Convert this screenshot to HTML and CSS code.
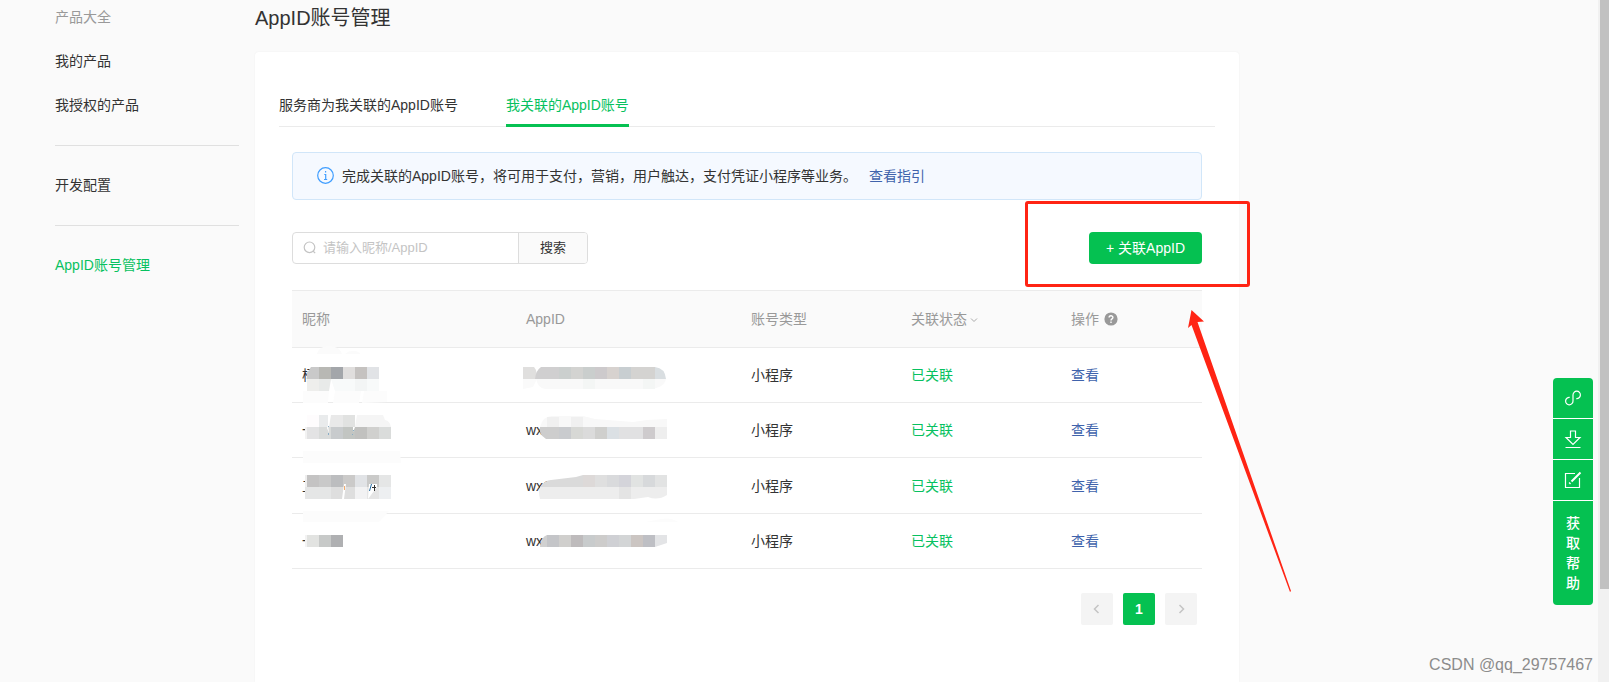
FILE: index.html
```html
<!DOCTYPE html>
<html lang="zh-CN">
<head>
<meta charset="utf-8">
<title>AppID账号管理</title>
<link rel="stylesheet" href="styles.css">
</head>
<body>
<div class="page">
  <nav class="sidebar">
    <div class="group">
      <span class="group-title">产品大全</span>
      <a class="nav-link" href="#">我的产品</a>
      <a class="nav-link" href="#">我授权的产品</a>
    </div>
    <div class="group"><a class="nav-link" href="#">开发配置</a></div>
    <div class="group"><a class="nav-link active" href="#">AppID账号管理</a></div>
  </nav>
  <main class="main">
    <h1 class="title">AppID账号管理</h1>
    <section class="card">
      <div class="tabs">
        <button class="tab" type="button">服务商为我关联的AppID账号</button>
        <button class="tab selected" type="button">我关联的AppID账号</button>
      </div>
      <div class="panel">
        <div class="notice">
          <svg class="info" viewBox="0 0 17 17"><circle cx="8.5" cy="8.5" r="7.8"/><path d="M7.300 7.500h1.400v5M7 12.500h3.200"/><path d="M8.600 4v1.600"/></svg>
          <span>完成关联的AppID账号，将可用于支付，营销，用户触达，支付凭证小程序等业务。</span>
          <a class="link guide" href="#">查看指引</a>
        </div>
        <div class="toolbar">
          <form class="search">
            <label class="field">
              <svg class="glass" viewBox="0 0 14 14"><circle cx="6.5" cy="6.3" r="5.3"/><path d="M10 10l2.2 2.2"/></svg>
              <input class="input" type="text" placeholder="请输入昵称/AppID" aria-label="请输入昵称/AppID">
            </label>
            <button class="search-btn" type="button">搜索</button>
          </form>
          <button class="add-btn" type="button">+ 关联AppID</button>
        </div>
        <table class="table">
          <colgroup><col class="c-name"><col class="c-id"><col class="c-type"><col class="c-state"><col></colgroup>
          <thead>
            <tr>
              <th>昵称</th><th>AppID</th><th>账号类型</th>
              <th>关联状态<svg class="caret" viewBox="0 0 10 8"><path d="M2 2.500l3 3 3-3"/></svg></th>
              <th>操作<svg class="help" viewBox="0 0 14 14"><circle cx="7" cy="7" r="6.6"/><path d="M5.1 5.6c0-2.4 3.8-2.4 3.8-.1C8.900 6.900 7 6.900 7 8.400M7 9.600v1.500"/></svg></th>
            </tr>
          </thead>
          <tbody>
            <tr>
              <td>杨
                <svg class="mosaic" viewBox="292 338 170 76">
                  <path fill="#fff" d="M308 358h15v10h-15z"/>
                  <path fill="#fbfbfb" d="M317 354q2-8 12-8t13 8zM345 354q7-6 15-1v1z"/>
                  <path fill="#c9c9c9" d="M307 379v-6l4-6h8v12z"/>
                  <path fill="#b8b8b4" d="M319 367h12v12h-12z"/><path fill="#a3a6aa" d="M331 367h12v12h-12z"/>
                  <path fill="#e0dedd" d="M343 367h12v12h-12z"/><path fill="#c5c2c0" d="M355 367h12v12h-12z"/><path fill="#e1e3e6" d="M367 367h12v12h-12z"/>
                  <path fill="#eeeeec" d="M307 379h12v12h-12z"/><path fill="#e8eae9" d="M319 379h12l-2 12h-10z"/>
                  <path fill="#f8fafa" d="M331 379h48v12h-44z"/><path fill="#f3f5f5" d="M355 379h12v12h-12z"/>
                  <path fill="#fcfcfc" d="M303 391h26l-1 12h-25zM335 391h26l-2 12h-26zM364 391h23v11l-25 1z"/>
                </svg></td>
              <td>
                <svg class="mosaic" viewBox="516 338 170 76">
                  <path fill="#e0dfde" d="M523 367h11l2 3 1 9h-14z"/><path fill="#fafafa" d="M523 379h14l-4 8-10 2z"/>
                  <path fill="#d0cfd0" d="M535 379q1-9 6-12h6v12z"/><path fill="#d0cfd0" d="M547 367h12v12h-12z"/><path fill="#cbcfce" d="M559 367h12v12h-12z"/>
                  <path fill="#d3d3d1" d="M571 367h12v12h-12z"/><path fill="#cacecd" d="M583 367h12v12h-12z"/><path fill="#cdcacc" d="M595 367h12v12h-12z"/>
                  <path fill="#d7d2cf" d="M607 367h12v12h-12z"/><path fill="#c8ced1" d="M619 367h12v12h-12z"/><path fill="#d4d3d1" d="M631 367h24v12h-24z"/>
                  <path fill="#d9dee1" d="M655 367q10 1 11 12h-11z"/>
                  <path fill="#f9f9f9" d="M536 379h130q-2 10-19 10H545q-7-1-9-10z"/><path fill="#f4f6f5" d="M583 379h12v10h-12zM643 379h12v10h-12z"/>
                </svg></td>
              <td>小程序</td><td class="ok">已关联</td><td><a class="link" href="#">查看</a></td>
            </tr>
            <tr>
              <td>一
                <svg class="mosaic" viewBox="292 393 170 76">
                  <path fill="#fff" d="M305 421h14v8h-14z"/>
                  <path fill="#fefcfd" d="M307 415h12v12h-12z"/><path fill="#e9ebec" d="M319 415h9v12h-9z"/>
                  <path fill="#e9e9e9" d="M331 415h12v12h-14z"/><path fill="#e1e2e1" d="M343 415h12v12h-12z"/><path fill="#f5f5f5" d="M357 415h26l2 5q5 1 6 7h-36z"/>
                  <path fill="#f2f2f2" d="M305 427h2v12h-2z"/><path fill="#e3e3e4" d="M307 427h12v12h-12z"/><path fill="#d9dbda" d="M319 427h12v12h-12z"/>
                  <path fill="#c8cbcd" d="M331 427h12v12h-12z"/><path fill="#c2c5c2" d="M343 427h12v12h-12z"/><path fill="#c1c1bf" d="M355 427h12v12h-12z"/>
                  <path fill="#d0d0ce" d="M367 427h12v12h-12z"/><path fill="#dadcdb" d="M379 427h12v12h-12z"/>
                  <path fill="#fff" d="M328 425l1 8-2-5zM353 427h2l-2 5z"/><path fill="#8baec6" d="M328 426h1v1h-1zM328 433h1v2h-1zM353 430h1v1h-1zM352 434h1v1h-1z"/>
                  <path fill="#fcfcfc" d="M303 451h97l1 12h-98z"/>
                </svg></td>
              <td>wx
                <svg class="mosaic" viewBox="516 393 170 76">
                  <path fill="#f8f8f8" d="M540 427q3-11 12-11h31l12 3 38 3 14-2 20-1v8z"/><path fill="#f0f0f0" d="M547 417h12v10h-12zM571 417h12v10h-12z"/>
                  <path fill="#cdcdcd" d="M546 439q-8-5-6-12h19v12z"/><path fill="#c9cbce" d="M559 427h12v12h-12z"/><path fill="#d7d8d5" d="M571 427h12v12h-12z"/>
                  <path fill="#dbdbdb" d="M583 427h12v12h-12z"/><path fill="#cfcfcd" d="M595 427h12v12h-12z"/><path fill="#dbe0e4" d="M607 427h12v12h-12z"/>
                  <path fill="#e1e1e2" d="M619 427h24v12h-24z"/><path fill="#cecbcd" d="M643 427h12v12h-12z"/><path fill="#eee" d="M655 427h12v12h-12z"/>
                </svg></td>
              <td>小程序</td><td class="ok">已关联</td><td><a class="link" href="#">查看</a></td>
            </tr>
            <tr>
              <td>工
                <svg class="mosaic" viewBox="292 448 170 76">
                  <path fill="#fff" d="M305 476h14v18h-14z"/>
                  <path fill="#eee" d="M305 475h2v12h-2z"/><path fill="#c4c3c3" d="M307 475h12v12h-12z"/><path fill="#c9c9c9" d="M319 475h12v12h-12z"/>
                  <path fill="#bcbdbf" d="M331 475h12v12h-12z"/><path fill="#cbcac9" d="M343 475h12v12h-12z"/><path fill="#e1e3e6" d="M355 475h12v12h-12z"/>
                  <path fill="#cacac9" d="M367 475h12v12h-12z"/><path fill="#e5e6e6" d="M379 475h12v12h-12z"/>
                  <path fill="#e5e6e6" d="M305 487h26v12h-26z"/><path fill="#dedede" d="M331 487h24v12h-24z"/><path fill="#f2f2f3" d="M355 487h12v12h-12z"/>
                  <path fill="#e5e5e5" d="M367 487h12v12h-12z"/><path fill="#edeff1" d="M379 487h12v12h-12z"/>
                  <path fill="#fff" d="M344 484h2l-2 15h-2zM369 484h8v3l-9 12z"/><path fill="#f3ad70" d="M344 486h1v4h-1z"/><path stroke="#246ba2" d="M371.500 484l-2 7"/><path stroke="#333" d="M372 487.500h4M374.500 485v6"/>
                  <path fill="#fcfcfc" d="M303 511h86l-10 11h-76z"/>
                </svg></td>
              <td>wx1
                <svg class="mosaic" viewBox="516 448 170 76">
                  <path fill="#ededed" d="M540 499q-2-8 0-12h127v8q-9 6-19 2l-14 2z"/>
                  <path fill="#dadada" d="M540 487q5-7 11-7l25-3 7-2h12v12z"/><path fill="#ddd9d8" d="M583 475h12v12h-12z"/><path fill="#dfdfdf" d="M595 475h12v12h-12z"/>
                  <path fill="#d9dadc" d="M607 475h12v12h-12z"/><path fill="#d4d4da" d="M619 475h12v12h-12z"/><path fill="#e1e3e2" d="M631 475h12v12h-12z"/>
                  <path fill="#d7d9db" d="M643 475h12v12h-12z"/><path fill="#e2e3e3" d="M655 475h12v12h-12z"/><path fill="#e4e4e4" d="M619 487h12v12h-12z"/>
                </svg></td>
              <td>小程序</td><td class="ok">已关联</td><td><a class="link" href="#">查看</a></td>
            </tr>
            <tr>
              <td>一
                <svg class="mosaic" viewBox="292 504 170 76">
                  <path fill="#fff" d="M305 528h14v16h-14z"/>
                  <path fill="#f3f3f3" d="M305 535h2v12h-2z"/><path fill="#e2e3e1" d="M307 535h12v12h-12z"/><path fill="#c7c9c8" d="M319 535h12v12h-12z"/><path fill="#afb0b2" d="M331 535h12v12h-12z"/>
                </svg></td>
              <td>wx
                <svg class="mosaic" viewBox="516 504 170 76">
                  <path fill="#d0d0d0" d="M540 547q1-10 7-12v12z"/><path fill="#c4c5c8" d="M547 535h12v12h-12z"/><path fill="#d0cfcd" d="M559 535h12v12h-12z"/>
                  <path fill="#bebbbc" d="M571 535h12v12h-12z"/><path fill="#c8cbcc" d="M583 535h12v12h-12z"/><path fill="#cdcccb" d="M595 535h12v12h-12z"/>
                  <path fill="#cfd0d4" d="M607 535h12v12h-12z"/><path fill="#d3d5d6" d="M619 535h12v12h-12z"/><path fill="#cbc5c2" d="M631 535h12v12h-12z"/>
                  <path fill="#bebfc4" d="M643 535h12v12h-12z"/><path fill="#e3e4e6" d="M655 535h12v8l-12 4z"/><path fill="#fcfcfc" d="M646 522l10-2q14-4 22 2z"/>
                </svg></td>
              <td>小程序</td><td class="ok">已关联</td><td><a class="link" href="#">查看</a></td>
            </tr>
          </tbody>
        </table>
        <div class="pager">
          <button class="page-btn" type="button" aria-label="上一页"><svg class="chev" viewBox="0 0 12 12"><path d="M7.500 2l-4 4 4 4"/></svg></button>
          <button class="page-btn current" type="button">1</button>
          <button class="page-btn" type="button" aria-label="下一页"><svg class="chev" viewBox="0 0 12 12"><path d="M4.500 2l4 4-4 4"/></svg></button>
        </div>
      </div>
    </section>
  </main>
</div>

<aside class="float-bar">
  <button class="float-btn" type="button" aria-label="链接"><svg class="float-icon" viewBox="0 0 16 16"><path d="M4.700 7.400A3.700 3.700 0 1 0 8 11V5a3.700 3.700 0 1 1 3.300 3.600"/></svg></button>
  <button class="float-btn" type="button" aria-label="下载"><svg class="float-icon" viewBox="0 0 16 16"><path d="M5.500 0h5v6.500H15L8 13.500 1 6.500h4.500zM.5 16.500h15"/></svg></button>
  <button class="float-btn" type="button" aria-label="编辑"><svg class="float-icon" viewBox="0 0 16 16"><path d="M10 1.500H.5v14h14V6"/><path class="pen" d="M15.500.5L6.500 9.500M4.300 11.700l1-1"/></svg></button>
  <button class="float-btn help-btn" type="button">获<br>取<br>帮<br>助</button>
</aside>
<div class="scroll-track"><div class="scroll-thumb"></div></div>
<div class="mark-box"></div>
<svg class="mark-arrow" viewBox="0 0 104 284"><path d="M4.500 0L17 11.500l-6.500.5L104 281l-1 1L4.500 15 1 18z"/></svg>
<div class="watermark">CSDN @qq_29757467</div>
</body>
</html>
```
FILE: styles.css
```css
* { box-sizing: border-box; }
body {
  margin: 0;
  height: 100vh;
  overflow: hidden;
  position: relative;
  background: #fafafa;
  color: #333;
  font: 14px/20px "Liberation Sans", "Noto Sans CJK SC", sans-serif;
}
button, input { font: inherit; color: inherit; border: 0; margin: 0; padding: 0; background: none; }
a { text-decoration: none; color: inherit; }
svg { fill: none; flex: none; }

.page { display: flex; gap: 16px; min-height: 100vh; padding-left: 55px; padding-right: 60px; }
.sidebar { flex: none; width: 184px; padding-top: 7px; }
.group { display: flex; flex-direction: column; gap: 24px; padding-bottom: 30px; }
.group + .group { border-top: 1px solid #e0e0e0; padding-top: 29px; }
.group-title { color: #999; }
.active { color: #07c160; }

.main { flex: 1; max-width: 984px; display: flex; flex-direction: column; }
.title { margin: 0; padding: 4px 0 20px; font-size: 20px; line-height: 28px; font-weight: 400; }
.card { flex: 1; background: #fff; border-radius: 4px 4px 0 0; padding: 32px 24px; box-shadow: 0 0 2px #eee; }
.tabs { display: flex; gap: 48px; border-bottom: 1px solid #ebebeb; }
.tab { height: 43px; padding-top: 1px; margin-bottom: -1px; white-space: nowrap; border-bottom: 3px solid transparent; }
.tab.selected { color: #07c160; border-bottom-color: #06c152; }
.panel { padding: 25px 13px; }

.notice { display: flex; align-items: center; gap: 8px; height: 48px; padding: 0 24px 1px; background: #f5f9ff; border: 1px solid #d1e6f9; border-radius: 4px; }
.info { width: 17px; height: 17px; stroke: #409eff; stroke-width: 1.2; }
.link { color: #4063ac; }
.guide { margin-left: 4px; }

.toolbar { display: flex; justify-content: space-between; margin: 32px 0 26px; height: 32px; }
.search { display: flex; width: 296px; border: 1px solid #ddd; border-radius: 4px; font-size: 13px; overflow: hidden; }
.field { flex: 1; display: flex; align-items: center; gap: 6px; padding-left: 10px; }
.glass { width: 14px; height: 14px; stroke: #c4c4c4; stroke-width: 1.2; }
.input { flex: 1; min-width: 0; outline: 0; }
.input::placeholder { color: #c4c4c4; opacity: 1; }
.search-btn { width: 69px; background: #fafafa; border-left: 1px solid #ddd; }
.add-btn { padding: 0 17px; border-radius: 4px; background: #05c151; color: #fff; }

.table { width: 100%; table-layout: fixed; border-collapse: separate; border-spacing: 0; }
.c-name, .c-id { width: 225px; }
.c-name { width: 224px; }
.c-type, .c-state { width: 160px; }
.table th, .table td { position: relative; padding: 0 10px; text-align: left; font-weight: 400; border-bottom: 1px solid #ebebeb; white-space: nowrap; }
.table th { height: 58px; color: #999; background: #fafafa; border-top: 1px solid #ebebeb; }
.table td { height: 55px; }
.table tr:nth-child(3) td { height: 56px; }
.table .ok { color: #07c160; }
.caret { width: 10px; height: 8px; margin-left: 2px; stroke: #aaa; }
.help { width: 14px; height: 14px; margin-left: 5px; vertical-align: -2px; stroke: #fff; stroke-width: 1.4; }
.help circle { fill: #999; stroke: none; }
.mosaic { position: absolute; left: 0; top: -10px; width: 170px; height: 76px; }

.pager { display: flex; justify-content: flex-end; gap: 10px; padding: 24px 5px 0 0; }
.page-btn { display: flex; align-items: center; justify-content: center; width: 32px; height: 32px; border-radius: 2px; background: #f4f4f4; font-weight: 700; }
.page-btn.current { background: #05c151; color: #fff; }
.chev { width: 12px; height: 12px; stroke: #c4c4c4; stroke-width: 1.5; }

.float-bar { position: absolute; right: 16px; top: 378px; width: 40px; display: flex; flex-direction: column; gap: 1px; border-radius: 4px; overflow: hidden; background: #fff; }
.float-btn { display: flex; align-items: center; justify-content: center; height: 40px; background: #05c151; color: #fff; }
.float-icon { width: 16px; height: 16px; stroke: #fff; stroke-width: 1.2; overflow: visible; }
.float-icon .pen { stroke-width: 2; }
.help-btn { height: 104px; font-weight: 500; }
.scroll-track { position: absolute; right: 0; top: 0; bottom: 0; width: 11px; padding-left: 2px; background: #f1f1f1; }
.scroll-thumb { height: 589px; background: #c1c1c1; }

.mark-box { position: absolute; left: 1025px; top: 201px; width: 225px; height: 86px; border: 3px solid #ff2414; border-radius: 3px; }
.mark-arrow { position: absolute; left: 1187px; top: 310px; width: 104px; height: 284px; fill: #ff2414; }
.watermark { position: absolute; right: 16px; bottom: 7px; font-size: 16px; color: #8c8c8c; }
```
